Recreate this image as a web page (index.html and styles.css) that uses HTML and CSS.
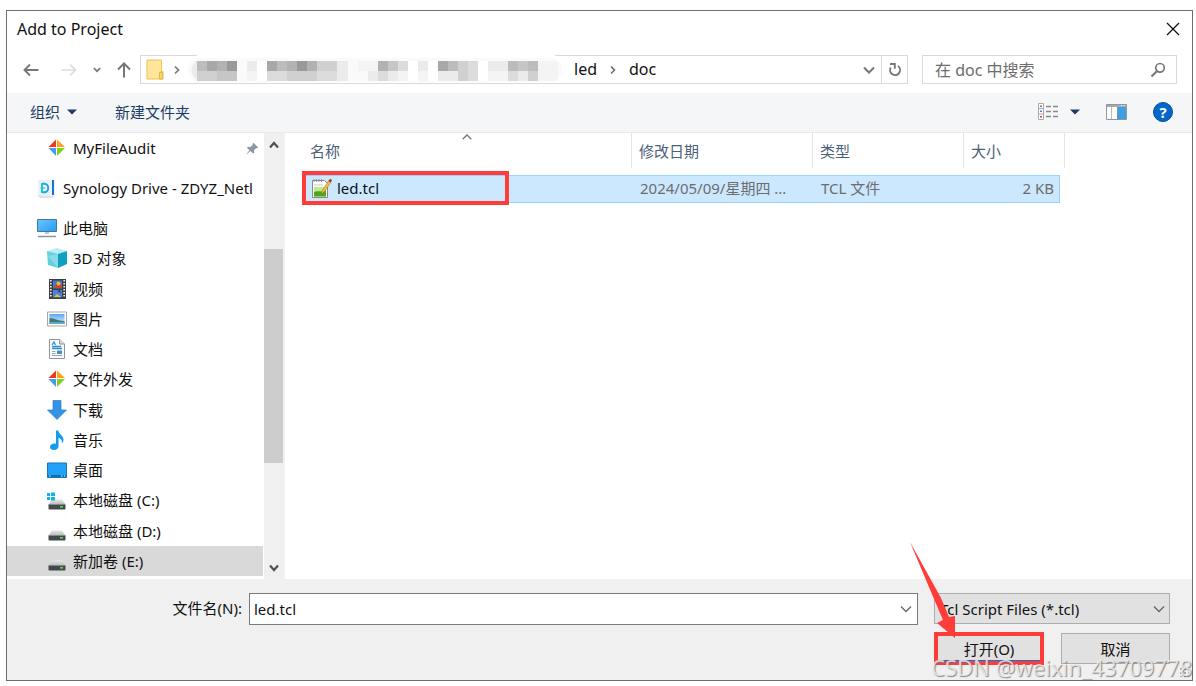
FILE: index.html
```html
<!DOCTYPE html>
<html lang="zh-CN">
<head>
    <meta charset="UTF-8">
    <meta name="viewport" content="width=device-width, initial-scale=1.0">
    <title>Add to Project</title>
    <link rel="stylesheet" href="styles.css">
</head>
<body>

    <!-- shared symbols -->
    <svg class="symbols" width="0" height="0" aria-hidden="true">
        <defs>
            <linearGradient id="blue" x1="0" y1="0" x2="1" y2="1">
                <stop offset="0" stop-color="#6cc4ff"/><stop offset="1" stop-color="#259df5"/>
            </linearGradient>
            <linearGradient id="lid" x1="0" y1="0" x2="0" y2="1">
                <stop offset="0" stop-color="#e6e7e8"/><stop offset="1" stop-color="#b8babc"/>
            </linearGradient>
            <linearGradient id="sky" x1="0" y1="0" x2="0" y2="1">
                <stop offset="0" stop-color="#5aa5f0"/><stop offset="1" stop-color="#e6f4ff"/>
            </linearGradient>
        </defs>
        <symbol id="pinwheel" viewBox="0 0 20 20">
            <path d="M9 1.500V9H1.500z" fill="#f0371c"/>
            <path d="M10 1.500V9H18z" fill="#fda41f"/>
            <path d="M1.500 10H9V18z" fill="#3f9df2"/>
            <path d="M10 10H18L10 18z" fill="#86cf1c"/>
        </symbol>
        <symbol id="disk" viewBox="0 0 20 20">
            <path d="M5 9.500h10l3.500 5h-17z" fill="url(#lid)"/>
            <rect x="1.500" y="14" width="17" height="5.500" rx=".8" fill="#46494b"/>
            <path d="M2 14.500h16" stroke="#85898b"/>
            <rect x="13" y="16" width="3" height="1.600" fill="#4fe04f"/>
        </symbol>
    </svg>

    <main class="dialog">
        <header class="title-bar">
            <h1>Add to Project</h1>
            <button type="button" class="icon-btn" aria-label="Close">
                <svg width="14" height="14" viewBox="0 0 14 14"><path d="M1 1l12 12M13 1L1 13" stroke="#111" stroke-width="1.300"/></svg>
            </button>
        </header>

        <nav class="nav-bar">
            <div class="history">
                <button type="button" class="icon-btn" aria-label="Back">
                    <svg width="16" height="14" viewBox="0 0 16 14"><path d="M15.500 7H1.500M7 1.500L1.500 7L7 12.500" fill="none" stroke="#777" stroke-width="1.900"/></svg>
                </button>
                <button type="button" class="icon-btn" aria-label="Forward">
                    <svg width="16" height="14" viewBox="0 0 16 14"><path d="M.5 7h14M9 1.500L14.500 7L9 12.500" fill="none" stroke="#dcdcdc" stroke-width="1.700"/></svg>
                </button>
                <button type="button" class="icon-btn" aria-label="Recent">
                    <svg width="8" height="6" viewBox="0 0 8 6"><path d="M.8 1L4 4.200L7.200 1" fill="none" stroke="#777" stroke-width="1.700"/></svg>
                </button>
                <button type="button" class="icon-btn" aria-label="Up">
                    <svg width="14" height="16" viewBox="0 0 14 16"><path d="M7 15.500V1.500M1 7.500L7 1.500l6 6" fill="none" stroke="#777" stroke-width="2"/></svg>
                </button>
            </div>
            <div class="address">
                <svg class="folder" width="18" height="22" viewBox="0 0 18 22">
                    <path d="M1 1h14.500v11.500h1.500V20H1z" fill="#ffe69a" stroke="#e9c455"/>
                    <path d="M13.500 20v-6.500l2-1.500V1" fill="none" stroke="#ecc94f"/>
                    <path d="M13.500 13.500h3V20h-3z" fill="#f9d66a" stroke="#e2b93e"/>
                </svg>
                <svg width="6" height="10" viewBox="0 0 6 10"><path d="M1 1.500L4.500 5L1 8.500" fill="none" stroke="#777" stroke-width="1.700"/></svg>
                <svg class="masked" width="376" height="29" viewBox="187 54 376 29">
                    <path d="M197 54h358v28H197z" fill="#fff"/>
                    <rect x="188" y="57" width="374" height="24" rx="12" fill="#fafafa"/>
                    <path d="M198 59a11 11 0 0 0 0 20z" fill="#ebebeb"/>
                    <g shape-rendering="crispEdges">
                        <path d="M257 60h10v20h-10zM408 60h10v20h-10zM428 60h10v20h-10zM478 60h10v20h-10z" fill="#fff"/>
                        <path d="M197 60h10v10h-10zM277 60h10v10h-10zM448 60h10v10h-10zM508 60h10v10h-10zM528 60h10v10h-10z" fill="#bcbcbc"/>
                        <path d="M207 60h10v10h-10zM267 60h10v10h-10zM438 60h10v10h-10z" fill="#a8a8a8"/>
                        <path d="M217 60h10v10h-10zM287 60h10v10h-10zM307 60h10v10h-10zM378 60h10v10h-10z" fill="#b2b2b2"/>
                        <path d="M227 60h10v10h-10zM297 60h10v10h-10z" fill="#999"/>
                        <path d="M197 70h20v10h-20zM287 70h30v10h-30zM317 60h10v10h-10zM327 60h10v10h-10zM458 60h10v20h-10zM528 70h10v10h-10z" fill="#d0d0d0"/>
                        <path d="M217 70h20v10h-20zM388 60h10v10h-10zM518 60h10v10h-10z" fill="#c6c6c6"/>
                        <path d="M267 70h20v10h-20zM317 70h20v10h-20zM378 70h10v10h-10zM398 60h10v10h-10zM468 60h10v20h-10zM508 70h10v10h-10z" fill="#dcdcdc"/>
                        <path d="M247 60h10v10h-10zM337 60h11v20h-11zM368 70h10v10h-10zM388 70h10v10h-10zM418 60h10v10h-10zM438 70h20v10h-20zM488 60h20v10h-20zM518 70h10v10h-10z" fill="#ebebeb"/>
                        <path d="M247 70h10v10h-10zM358 60h20v10h-20zM398 70h10v10h-10zM418 70h10v10h-10zM488 70h20v10h-20zM538 60h20v20h-20z" fill="#f4f4f4"/>
                    </g>
                </svg>
                <a href="#">led</a>
                <svg width="6" height="10" viewBox="0 0 6 10"><path d="M1 1.500L4.500 5L1 8.500" fill="none" stroke="#666" stroke-width="1.500"/></svg>
                <a href="#">doc</a>
                <button type="button" class="icon-btn history-drop" aria-label="Previous locations">
                    <svg width="12" height="8" viewBox="0 0 12 8"><path d="M1 1.500L6 6.500L11 1.500" fill="none" stroke="#777" stroke-width="2"/></svg>
                </button>
                <button type="button" class="icon-btn refresh" aria-label="Refresh">
                    <svg width="14" height="15" viewBox="0 0 14 15"><path d="M10 4A5 5 0 1 1 2.800 5.500M2 2h4.800v4.800" fill="none" stroke="#777" stroke-width="1.900"/></svg>
                </button>
            </div>
            <div class="search">
                <input type="search" placeholder="在 doc 中搜索" aria-label="在 doc 中搜索">
                <svg width="16" height="16" viewBox="0 0 16 16"><circle cx="10" cy="5.800" r="4.300" fill="none" stroke="#777" stroke-width="1.700"/><path d="M7 9L1.500 14.500" stroke="#777" stroke-width="2.200"/></svg>
            </div>
        </nav>

        <div class="command-bar">
            <button type="button" class="command">组织
                <svg width="10" height="6" viewBox="0 0 10 6"><path d="M0 .5h10L5 5.500z" fill="#1c3a63"/></svg>
            </button>
            <button type="button" class="command">新建文件夹</button>
            <div class="view-tools">
                <button type="button" class="icon-btn" aria-label="View">
                    <svg width="21" height="17" viewBox="0 0 21 17">
                        <path d="M.5.5h5v16h-5zM.5 5.500h5M.5 11h5" fill="#fff" stroke="#aaa"/>
                        <path d="M8 3.500h5M15 3.500h5M8 8.500h5M15 8.500h5M8 13.500h5M15 13.500h5" stroke="#8a8a8a" stroke-width="1.300"/>
                        <path d="M2 2.500h2v1.500H2z" fill="#777"/><path d="M2 7.500h2V9H2z" fill="#3d8be0"/><path d="M2 13h2v1.500H2z" fill="#d5382d"/>
                    </svg>
                    <svg width="10" height="6" viewBox="0 0 10 6"><path d="M0 .5h10L5 5.500z" fill="#1c3a63"/></svg>
                </button>
                <button type="button" class="icon-btn" aria-label="Preview pane">
                    <svg width="21" height="16" viewBox="0 0 21 16">
                        <path d="M.5.5h20v15H.5z" fill="#fff" stroke="#8f979d"/>
                        <path d="M1 1h19v2H1z" fill="#a3aab0"/><path d="M15 1.500h1M17.500 1.500h1" stroke="#fff"/>
                        <path d="M5.500 3v12" stroke="#b8bdc1"/><path d="M11.500 3H20v12h-8.500z" fill="#3f9fe5"/><path d="M11.500 3v12" stroke="#85929b"/>
                    </svg>
                </button>
                <button type="button" class="help" aria-label="Help">?</button>
            </div>
        </div>

        <div class="content">
            <aside class="sidebar">
                <ul class="tree">
                    <li class="quick child"><a href="#"><svg><use href="#pinwheel"/></svg>MyFileAudit
                        <svg class="pin" viewBox="0 0 14 14"><path d="M8 .8l5.200 5-1.500.9-.8-.2-2.300 2.600.3 2.400-1.300 1L4.700 9.800.8 13.300.5 13l3.300-4L1 6.300l1.200-1.200 2.500.2 2.700-2.400-.2-.9z" fill="#8a99a8"/></svg>
                    </a></li>
                    <li class="quick"><a href="#">
                        <svg viewBox="0 0 20 20">
                            <path d="M1 2h17v17H3l-2-2z" fill="#eef1f4"/><path d="M1 17l2 2h13" fill="none" stroke="#cbd1d6"/>
                            <path d="M5 5.800h2.500a3.700 4.200 0 0 1 0 8.400H5" fill="none" stroke="#19a9e8" stroke-width="2"/>
                            <path d="M5 5v10" stroke="#14cfc1" stroke-width="2"/><path d="M3.500 10H8" stroke="#22b7ee" stroke-width="1.200"/>
                            <path d="M15 2h2v15h-2z" fill="#1673dc"/>
                        </svg>Synology Drive - ZDYZ_Netl</a></li>
                    <li><a href="#">
                        <svg viewBox="0 0 20 20"><path d="M.5 1.500h19v12H.5z" fill="url(#blue)" stroke="#4b7896"/><path d="M8 14h4v2H8z" fill="#b9c7d3"/><path d="M1 18.500h18" stroke="#7f98ad" stroke-width="1.500"/></svg>
                        此电脑</a></li>
                    <li class="child"><a href="#">
                        <svg viewBox="0 0 20 20"><path d="M0 3l10-3 10 3-9 4z" fill="#b8edf3"/><path d="M0 3l11 3v14L1 17z" fill="#62d0de"/><path d="M20 3l-9 3v14l9-4z" fill="#129fc2"/><path d="M1 8l10-2v14z" fill="#a3e5ed" opacity=".6"/></svg>
                        3D 对象</a></li>
                    <li class="child"><a href="#">
                        <svg viewBox="0 0 20 20"><path d="M2 0h17v20H2z" fill="#3d3e43"/><path d="M6 1.500h9v8H6z" fill="#4277d3"/><path d="M6 11h9v7.500H6z" fill="#4c82db"/><path d="M6 9l4-4 5 1v3z" fill="#d0432e"/><circle cx="11.500" cy="4.500" r="2" fill="#e8bb2b"/><path d="M7 18l3-3 4 3z" fill="#eab92e"/><path d="M10 12l3-1 1 3z" fill="#283a62"/><path d="M3.800 1v18M17.200 1v18" stroke="#eee" stroke-width="1.700" stroke-dasharray="1.500 1.500"/></svg>
                        视频</a></li>
                    <li class="child"><a href="#">
                        <svg viewBox="0 0 20 20"><path d="M.5 3h19v14H.5z" fill="#fff" stroke="#a7a7a7"/><path d="M2.500 5h15v10h-15z" fill="url(#sky)"/><path d="M2.500 9c5 0 8 3 15 3v3h-15z" fill="#3f7772"/><path d="M2.500 13h15v2h-15z" fill="#5da9cd"/></svg>
                        图片</a></li>
                    <li class="child"><a href="#">
                        <svg viewBox="0 0 20 20"><path d="M2.500.5h10l5 4.500v14.500h-15z" fill="#fafafa" stroke="#8e9499"/><path d="M12.500.5V5h5" fill="#dcdfe1" stroke="#8e9499"/><path d="M5 6l2-3 1.500 3M5 7.500h9M5 9.500h10" fill="none" stroke="#2691d9" stroke-width="1.300"/><path d="M5 12.500h3.500M5 14.500h3.500M5 16.500h10" stroke="#9ba4aa"/><path d="M10 11.500h5V15h-5z" fill="#3f92bf"/></svg>
                        文档</a></li>
                    <li class="child"><a href="#"><svg><use href="#pinwheel"/></svg>文件外发</a></li>
                    <li class="child"><a href="#">
                        <svg viewBox="0 0 20 20"><path d="M6 .5h8V10h5.500L10 19.500.5 10H6z" fill="#3593e3" stroke="#2a7ecb" stroke-width=".7"/></svg>
                        下载</a></li>
                    <li class="child"><a href="#">
                        <svg viewBox="0 0 20 20"><path d="M9 .5h2.300c.5 4 5.200 5 5.200 9 0 1.700-.6 3-1.700 4 .6-3-.4-4.800-3.300-5.800V16c0 2.500-2 4-4.500 4S3 18.700 3 17c0-2.500 3-4 6-3.200z" fill="#119cee"/></svg>
                        音乐</a></li>
                    <li class="child"><a href="#">
                        <svg viewBox="0 0 20 20"><path d="M.5 3h19v14.500H.5z" fill="#1fa1fa" stroke="#1577b8"/><path d="M1 15h18v2H1z" fill="#0d6fb0"/><path d="M2 16h1.500M14 16h1.500M17 16h1" stroke="#fff"/></svg>
                        桌面</a></li>
                    <li class="child"><a href="#">
                        <svg viewBox="0 0 20 20"><use href="#disk"/><path d="M0 3h3v3H0zM4 2.500h4V6H4zM0 7h3v3H0zM4 7h4v3.500H4z" fill="#08b6ed"/></svg>
                        本地磁盘 (C:)</a></li>
                    <li class="child"><a href="#"><svg><use href="#disk"/></svg>本地磁盘 (D:)</a></li>
                    <li class="child selected"><a href="#"><svg><use href="#disk"/></svg>新加卷 (E:)</a></li>
                </ul>
                <div class="scrollbar">
                    <svg width="10" height="8" viewBox="0 0 10 8"><path d="M1 6.500L5 2l4 4.500" fill="none" stroke="#505050" stroke-width="2.200"/></svg>
                    <div class="track"><div class="thumb"></div></div>
                    <svg width="10" height="8" viewBox="0 0 10 8"><path d="M1 1.500L5 6l4-4.500" fill="none" stroke="#505050" stroke-width="2.200"/></svg>
                </div>
            </aside>

            <section class="files">
                <table>
                    <thead>
                        <tr>
                            <th class="col-name">名称
                                <svg class="sort" width="10" height="6" viewBox="0 0 10 6"><path d="M.7 5.300L5 1l4.300 4.300" fill="none" stroke="#777" stroke-width="1.300"/></svg>
                            </th>
                            <th class="col-date">修改日期</th>
                            <th class="col-type">类型</th>
                            <th class="col-size">大小</th>
                        </tr>
                    </thead>
                    <tbody>
                        <tr>
                            <td>
                                <div class="file-name">
                                    <svg width="21" height="21" viewBox="0 0 21 21">
                                        <path d="M1.500 2.500h12l3 3v14h-15z" fill="#fbfbfb" stroke="#888"/>
                                        <path d="M3 7h9" stroke="#c6cccc"/>
                                        <path d="M3 9h12v9.500H3z" fill="#c3e889"/><path d="M3 14c4-2 8 1 12-2v6.500H3z" fill="#4ba61c"/>
                                        <path d="M3 1v3M5.500 1v3M8 1v3M10.500 1v3" stroke="#888" stroke-width=".8"/>
                                        <path d="M10.500 16l1-4L18 2.500l2 1.500L13.500 13.500z" fill="#f3c33a" stroke="#9a7826" stroke-width=".6"/>
                                        <path d="M17.500 3L19 .7l2 1.300-1.200 2.500z" fill="#b92b25"/>
                                    </svg>led.tcl
                                </div>
                            </td>
                            <td>2024/05/09/星期四 ...</td>
                            <td>TCL 文件</td>
                            <td class="size">2 KB</td>
                        </tr>
                    </tbody>
                </table>
                <div class="mark-file"></div>
            </section>
        </div>

        <form class="footer">
            <label for="file-name">文件名(N):</label>
            <div class="combo">
                <input type="text" id="file-name" value="led.tcl">
                <button type="button" class="icon-btn" aria-label="File names">
                    <svg width="12" height="8" viewBox="0 0 12 8"><path d="M1 1.500L6 6.500L11 1.500" fill="none" stroke="#666" stroke-width="1.300"/></svg>
                </button>
            </div>
            <div class="filter">
                <select aria-label="File type">
                    <option>Tcl Script Files (*.tcl)</option>
                </select>
                <svg width="12" height="8" viewBox="0 0 12 8"><path d="M1 1.500L6 6.500L11 1.500" fill="none" stroke="#666" stroke-width="1.300"/></svg>
            </div>
            <div class="actions">
                <button type="button" class="open">打开(O)</button>
                <button type="button">取消</button>
            </div>
        </form>

        <svg class="arrow" width="48" height="98" viewBox="0 0 48 98"><path d="M1 0L32 56L40 75L46 74V96L28 81L34 78L25 57z" fill="#fe3c3a"/></svg>
        <div class="grip"></div>
        <div class="watermark">CSDN @weixin_43709778</div>
    </main>

</body>
</html>
```
FILE: styles.css
```css
* {
    box-sizing: border-box;
}
body {
    margin: 0;
    padding: 10px 3px 5px 6px;
    height: 100vh;
    background-color: #fff;
    color: #111;
    font-family: "Noto Sans", "Noto Sans CJK SC", sans-serif;
    font-size: 15px;
    line-height: 20px;
}
button, input, select {
    font: inherit;
    color: inherit;
    margin: 0;
}
a {
    color: inherit;
    text-decoration: none;
}
svg {
    display: block;
    flex: none;
}
.symbols {
    position: absolute;
}
.dialog {
    position: relative;
    display: flex;
    flex-direction: column;
    height: 100%;
    border: 1px solid #6c6c6c;
    background-color: #fff;
}
.icon-btn {
    display: flex;
    align-items: center;
    justify-content: center;
    padding: 0;
    border: none;
    background: none;
}

/* title */
.title-bar {
    display: flex;
    justify-content: space-between;
    align-items: center;
    height: 36px;
    padding: 0 12px 0 10px;
}
h1 {
    margin: 0;
    font-size: 16px;
    font-weight: normal;
}

/* navigation */
.nav-bar {
    display: flex;
    align-items: center;
    gap: 14px;
    padding: 8px 15px 9px 16px;
    font-size: 16px;
}
.history {
    display: flex;
    align-items: center;
    gap: 16px;
    margin-right: -5px;
}
.history .icon-btn:nth-child(1) {
    margin-right: 6px;
}
.address {
    flex: 1;
    display: flex;
    align-items: center;
    height: 29px;
    border: 1px solid #d9d9d9;
    padding-left: 5px;
}
.folder {
    margin-right: 10px;
}
.masked {
    margin: -1px 11px 0 7px;
}
.address a {
    margin: 0 13px 2px 0;
}
.address a + svg {
    margin-right: 13px;
}
.history-drop {
    width: 24px;
    margin-left: auto;
}
.refresh {
    align-self: stretch;
    width: 26px;
    border-left: 1px solid #d9d9d9;
}
.search {
    display: flex;
    align-items: center;
    width: 255px;
    height: 29px;
    padding: 0 10px 0 12px;
    border: 1px solid #d9d9d9;
}
.search input {
    flex: 1;
    min-width: 0;
    padding: 0;
    border: none;
    outline: none;
    background: none;
}
.search input::placeholder {
    color: #6d6d6d;
}

/* commands */
.command-bar {
    display: flex;
    align-items: center;
    gap: 38px;
    height: 40px;
    padding: 0 19px 2px 23px;
    background-color: #f4f6f8;
    border-bottom: 1px solid #e6e8ea;
    color: #1e3c64;
}
.command {
    display: flex;
    align-items: center;
    gap: 7px;
    padding: 0;
    border: none;
    background: none;
}
.view-tools {
    display: flex;
    align-items: center;
    gap: 26px;
    margin-left: auto;
}
.view-tools .icon-btn {
    gap: 11px;
}
.help {
    width: 20px;
    height: 20px;
    padding: 0;
    border: 1px solid #07509b;
    border-radius: 50%;
    background-color: #0467cb;
    color: #fff;
    font-weight: bold;
    line-height: 18px;
}

/* folder tree */
.content {
    flex: 1;
    display: flex;
    min-height: 0;
}
.sidebar {
    display: flex;
    width: 278px;
    border-right: 1px solid #f3f3f3;
}
.tree {
    flex: 1;
    display: flex;
    flex-direction: column;
    min-width: 0;
    margin: 0;
    padding: 0 1px 3px 0;
    list-style: none;
}
.tree li {
    flex: 1;
}
.tree .quick {
    flex: none;
    height: 30px;
    margin-bottom: 10px;
}
.tree a {
    display: flex;
    align-items: center;
    gap: 6px;
    height: 100%;
    padding-left: 30px;
    white-space: nowrap;
    overflow: hidden;
}
.tree .child a {
    padding-left: 40px;
}
.tree svg {
    width: 20px;
    height: 20px;
}
.tree .pin {
    width: 13px;
    height: 13px;
    margin: 0 4px 0 auto;
}
.tree .selected {
    background-color: #d9d9d9;
}
.scrollbar {
    display: flex;
    flex-direction: column;
    align-items: center;
    width: 20px;
    padding: 8px 0 7px;
    background-color: #f0f0f0;
}
.track {
    flex: 1;
    width: 100%;
    padding: 100px 1px 0 0;
}
.thumb {
    height: 100%;
    max-height: 214px;
    background-color: #cdcdcd;
}

/* file list */
.files {
    position: relative;
    flex: 1;
    padding-left: 18px;
}
table {
    border-spacing: 0;
    table-layout: fixed;
    width: 757px;
}
th {
    position: relative;
    height: 35px;
    padding: 0 7px;
    border-right: 1px solid #e5e5e5;
    color: #4c607a;
    font-weight: normal;
    text-align: left;
}
.col-name {
    width: 329px;
}
.col-date {
    width: 181px;
}
.col-type {
    width: 151px;
}
/* the last divider stands clear of the row end */
.col-size {
    border-right: none;
}
.col-size::after {
    content: "";
    position: absolute;
    top: 0;
    right: -5px;
    height: 100%;
    border-right: 1px solid #e5e5e5;
}
.sort {
    position: absolute;
    top: 1px;
    left: 159px;
}
thead::after {
    content: "";
    display: block;
    height: 7px;
}
td {
    height: 28px;
    padding: 0 8px 2px;
    border: 1px solid #99d1ff;
    border-width: 1px 0;
    background-color: #cce8ff;
    color: #6d6d6d;
    white-space: nowrap;
}
td:last-child {
    border-right-width: 1px;
}
.file-name {
    display: flex;
    align-items: center;
    gap: 5px;
    color: #111;
}
.size {
    padding-right: 5px;
    text-align: right;
}
.mark-file {
    position: absolute;
    top: 38px;
    left: 17px;
    width: 207px;
    height: 34px;
    border: 4px solid #fe3c3a;
}

/* file name and buttons */
.footer {
    display: grid;
    grid-template-columns: 235px 1fr 236px;
    align-content: start;
    align-items: start;
    gap: 7px 0;
    height: 101px;
    padding: 14px 22px 0 0;
    background-color: #f0f0f0;
}
.footer label {
    padding-top: 5px;
    text-align: right;
}
.combo {
    display: flex;
    height: 32px;
    margin: 0 16px 0 7px;
    border: 1px solid #7a7a7a;
    background-color: #fff;
}
.combo input {
    flex: 1;
    min-width: 0;
    padding: 0 4px;
    border: none;
    outline: none;
    background: none;
}
.combo .icon-btn {
    width: 22px;
}
.filter {
    position: relative;
}
.filter select {
    display: block;
    width: 100%;
    height: 31px;
    padding: 0 24px 0 5px;
    border: 1px solid #adadad;
    border-radius: 0;
    background-color: #e1e1e1;
    appearance: none;
}
.filter svg {
    position: absolute;
    top: 12px;
    right: 5px;
    pointer-events: none;
}
.actions {
    grid-column: 3;
    display: flex;
    justify-content: space-between;
}
.actions button {
    width: 109px;
    height: 31px;
    margin-top: 1px;
    padding: 0;
    border: 1px solid #adadad;
    background-color: #e1e1e1;
    line-height: 18px;
}
.actions .open {
    width: 110px;
    height: 33px;
    margin-top: 0;
    border: 4px solid #fe3c3a;
    box-shadow: inset 0 -1px #0078d7;
}

/* overlays */
.arrow {
    position: absolute;
    right: 235px;
    bottom: 40px;
}
.grip {
    position: absolute;
    right: 3px;
    bottom: 3px;
    width: 10px;
    height: 10px;
    background: radial-gradient(circle, #aaa 1px, transparent 1px) 0 0 / 4px 4px;
}
.watermark {
    position: absolute;
    right: 0;
    bottom: 0;
    color: rgba(240, 240, 240, 0.8);
    font-size: 22px;
    line-height: 26px;
    text-shadow: 1px 1px 1px rgba(110, 110, 110, 0.8);
    pointer-events: none;
}
```
